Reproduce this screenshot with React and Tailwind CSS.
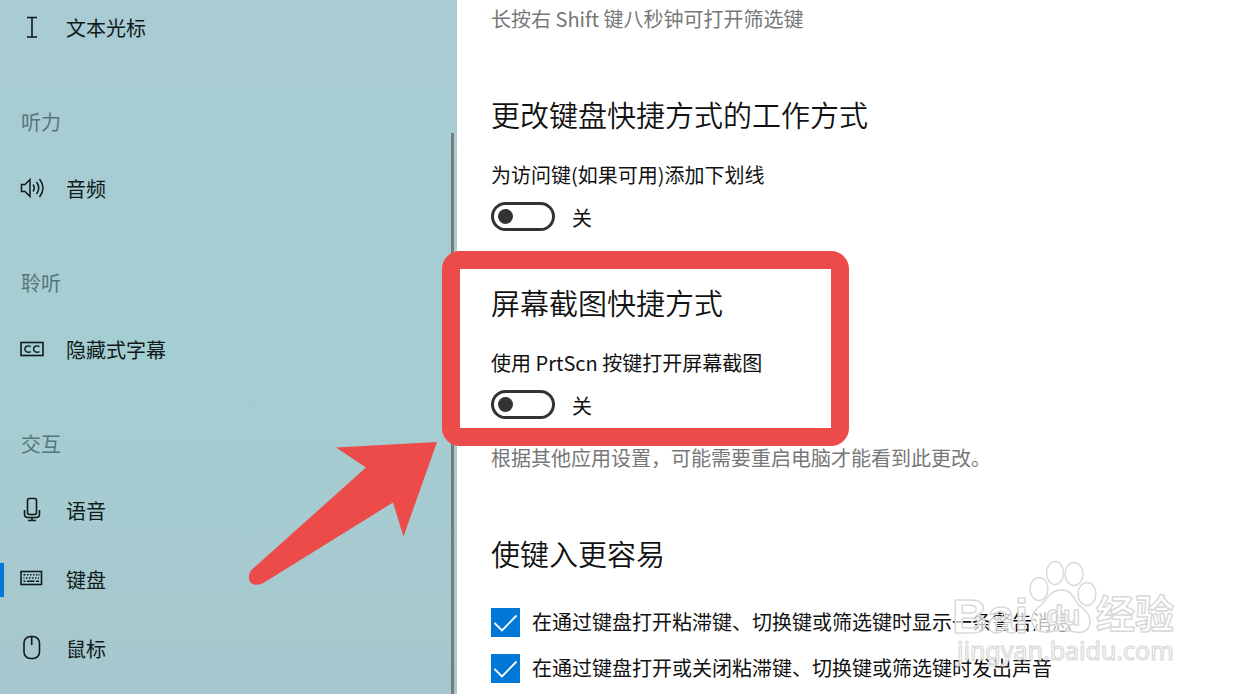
import React, { useState } from "react";

const iconProps = {
  width: 26,
  height: 26,
  viewBox: "0 0 26 26",
  fill: "none",
  stroke: "#10191b",
  strokeWidth: 1.6,
  "aria-hidden": true,
};

function CursorIcon() {
  return (
    <svg {...iconProps}>
      <path d="M8 4.500h10M8 24h10M13 4.500v19.500" />
    </svg>
  );
}

function AudioIcon() {
  return (
    <svg {...iconProps} strokeWidth="1.5">
      <path d="M2.500 10.500h3.500l5-5v17l-5-5h-3.500z" />
      <path d="M14 10.500q2.500 3.500 0 7M17.500 8q4.500 6 0 12M20.500 5q7 9 0 18" />
    </svg>
  );
}

function CaptionIcon() {
  return (
    <svg {...iconProps}>
      <rect x="2" y="7.500" width="22" height="13" />
      <path
        strokeWidth="1.4"
        d="M11.800 11.600c-3-1.600-6-.2-6 2.500s3 4 6 2.500M20.500 11.600c-3-1.600-6-.2-6 2.500s3 4 6 2.500"
      />
    </svg>
  );
}

function MicIcon() {
  return (
    <svg {...iconProps}>
      <rect x="8.500" y="2.500" width="9" height="16" rx="2" />
      <path d="M5.500 14v4c0 2 1.500 3.500 3.500 3.500h8c2 0 3.500-1.500 3.500-3.500v-4M13 21.500V24M9 24.500h8" />
    </svg>
  );
}

function KeyboardIcon() {
  return (
    <svg {...iconProps}>
      <rect x="2" y="6.500" width="20.500" height="13" />
      <path
        strokeWidth="1.500"
        d="M4.500 9.700h2m1.500 0h1.500m1.500 0h1.500m1.500 0h1.500m1.500 0h1.500m1 0h1M4.500 12.900h1m1.500 0h1.500m1.500 0h1.500m1.500 0h1.500m1.500 0h1.500m1.500 0h1M4.500 16.300h2m1.500 0h7.500m1.500 0h3"
      />
    </svg>
  );
}

function MouseIcon() {
  return (
    <svg {...iconProps}>
      <rect x="5" y="2.500" width="15.500" height="22" rx="6.500" />
      <path d="M12.700 3v8" />
    </svg>
  );
}

const groups = [
  { title: null, items: [{ label: "文本光标", Icon: CursorIcon }] },
  { title: "听力", items: [{ label: "音频", Icon: AudioIcon }] },
  { title: "聆听", items: [{ label: "隐藏式字幕", Icon: CaptionIcon }] },
  {
    title: "交互",
    items: [
      { label: "语音", Icon: MicIcon },
      { label: "键盘", Icon: KeyboardIcon, active: true },
      { label: "鼠标", Icon: MouseIcon },
    ],
  },
];

function Sidebar() {
  return (
    <nav className="flex w-[457px] shrink-0 overflow-hidden bg-linear-to-b from-[#a9cbd4] via-[#a5ced2] to-[#a6c7cd]">
      <div className="-mt-[7px] flex-1">
        {groups.map((group) => (
          <section key={group.items[0].label}>
            {group.title && (
              <h3 className="h-[92px] pt-[45px] pl-[21px] leading-[30px] text-[#58757a]">{group.title}</h3>
            )}
            <ul>
              {group.items.map(({ label, Icon, active }) => (
                <li key={label}>
                  <a
                    href="#"
                    aria-current={active ? "page" : undefined}
                    className="flex h-[69px] items-center text-[#10191b]"
                  >
                    <span className={active ? "h-[34px] w-1 bg-[#0078d7]" : "h-[34px] w-1"} />
                    <span className="mr-[21px] ml-[15px] flex pb-1">
                      <Icon />
                    </span>
                    <span className="leading-[30px]">{label}</span>
                  </a>
                </li>
              ))}
            </ul>
          </section>
        ))}
      </div>
      <div className="flex w-[6px] pt-[133px]">
        <div className="w-[3px] bg-[#777c7a]" />
      </div>
    </nav>
  );
}

function Toggle({ id, label }) {
  const [on, setOn] = useState(false);
  return (
    <div>
      <label htmlFor={id} className="block leading-[30px]">
        {label}
      </label>
      <div className="mt-3 flex h-[30px] items-start gap-[17px]">
        <input
          id={id}
          type="checkbox"
          role="switch"
          checked={on}
          onChange={() => setOn(!on)}
          className="flex h-[29px] w-16 appearance-none items-center rounded-full border-3 border-[#333] px-1 before:size-[15px] before:rounded-full before:bg-[#333] checked:justify-end checked:border-[#0078d7] checked:bg-[#0078d7] checked:before:bg-white"
        />
        <span className="pt-px leading-[30px]">{on ? "开" : "关"}</span>
      </div>
    </div>
  );
}

function CheckRow({ label }) {
  return (
    <label className="flex items-center gap-3 leading-[30px]">
      <span className="relative flex">
        <input
          type="checkbox"
          defaultChecked
          className="peer size-[29px] appearance-none border-2 border-[#333] checked:border-[#0078d7] checked:bg-[#0078d7]"
        />
        <svg
          viewBox="0 0 29 29"
          className="pointer-events-none absolute inset-0 hidden peer-checked:block"
          fill="none"
          stroke="#fff"
          strokeWidth="1.8"
          aria-hidden="true"
        >
          <path d="M3.500 15l7.500 7.500L25.500 7.500" />
        </svg>
      </span>
      {label}
    </label>
  );
}

function Highlight() {
  return (
    <>
      <div className="pointer-events-none absolute -top-[31px] -left-[49px] h-[195px] w-[407px] rounded-[18px] border-18 border-[#ed4a4a]" />
      <svg
        className="pointer-events-none absolute top-[158px] -left-[243px]"
        width="192"
        height="148"
        viewBox="0 0 192 148"
        fill="#ed4a4a"
        aria-hidden="true"
      >
        <path d="M189 2L88 7.500L118 27.500L4.500 129C0 133 0 140 3 143C7 146 12 145 17 142L145 62.500L155.500 96.500Z" />
      </svg>
    </>
  );
}

function Watermark() {
  return (
    <svg
      className="pointer-events-none absolute right-16 bottom-6"
      width="230"
      height="115"
      viewBox="0 0 230 115"
      fill="#fff"
      fillOpacity="0.7"
      stroke="#d9d9d9"
      strokeWidth="1.5"
      strokeLinejoin="round"
      fontFamily="'Liberation Sans', 'Noto Sans CJK SC', sans-serif"
      aria-hidden="true"
    >
      <text x="2" y="78" fontSize="49" fontWeight="700">Bai</text>
      <ellipse cx="89" cy="34" rx="9" ry="11.500" />
      <ellipse cx="105" cy="18" rx="8.500" ry="11.500" />
      <ellipse cx="124" cy="19" rx="9" ry="11.500" />
      <ellipse cx="137" cy="39" rx="9" ry="11.500" />
      <path d="M112 35c-12 0-15 9-21 15c-8 6-10 12-9 17c2 9 9 11 17 10c10-2 18-2 26 0c9 2 16-3 15-12c-1-8-7-11-12-16c-5-7-7-14-16-14z" />
      <text x="96" y="70" fontSize="28" fontWeight="700">du</text>
      <text x="146" y="73" fontSize="39" fontWeight="700">经验</text>
      <text x="7" y="105" fontSize="25" fontFamily="'Noto Sans', sans-serif" strokeWidth="1.2">
        jingyan.baidu.com
      </text>
    </svg>
  );
}

export default function App() {
  return (
    <div className="flex min-h-screen bg-white font-['Noto_Sans_CJK_SC',sans-serif] text-[20px] text-[#111]">
      <Sidebar />
      <main className="relative min-w-0 flex-1 pt-1 pl-[34px]">
        <p className="leading-[30px] text-[#777]">长按右 Shift 键八秒钟可打开筛选键</p>

        <section className="mt-[60px]">
          <h2 className="mb-[26px] text-[29px] leading-[40px] font-[350]">更改键盘快捷方式的工作方式</h2>
          <Toggle id="underline-keys" label="为访问键(如果可用)添加下划线" />
        </section>

        <section className="relative mt-[50px]">
          <h2 className="mb-[26px] text-[29px] leading-[40px] font-[350]">屏幕截图快捷方式</h2>
          <Toggle id="print-screen" label="使用 PrtScn 按键打开屏幕截图" />
          <p className="mt-[23px] leading-[30px] text-[#777]">根据其他应用设置，可能需要重启电脑才能看到此更改。</p>
          <Highlight />
        </section>

        <section className="mt-[60px]">
          <h2 className="mb-[34px] text-[29px] leading-[40px] font-[350]">使键入更容易</h2>
          <div className="flex flex-col gap-4">
            <CheckRow label="在通过键盘打开粘滞键、切换键或筛选键时显示一条警告消息" />
            <CheckRow label="在通过键盘打开或关闭粘滞键、切换键或筛选键时发出声音" />
          </div>
        </section>
        <Watermark />
      </main>
    </div>
  );
}
